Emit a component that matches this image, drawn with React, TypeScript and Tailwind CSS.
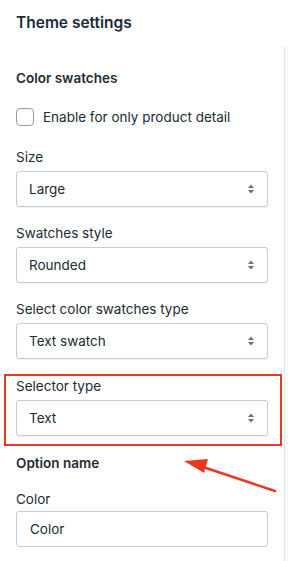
import React from "react";

const font = { fontFamily: "Inter, 'Noto Sans', sans-serif" };

const Chevrons = () => (
  <svg width="8" height="12" viewBox="0 0 8 12" className="text-[#637381]">
    <path d="M4 1.5 L7 5 H1 Z" fill="currentColor" />
    <path d="M4 10.5 L7 7 H1 Z" fill="currentColor" />
  </svg>
);

const Select = ({ label, value }: { label: string; value: string }) => (
  <div className="flex flex-col">
    <span className="mb-[4px] text-[13.5px] leading-[20px] text-[#212b36]">{label}</span>
    <div className="flex h-[36px] w-[252px] items-center justify-between rounded-[3px] border border-[#c4cdd5] bg-white pl-[12px] pr-[12px] shadow-[0_1px_0_rgba(22,29,37,0.05)]">
      <span className="text-[13.5px] text-[#212b36]">{value}</span>
      <Chevrons />
    </div>
  </div>
);

export default function App() {
  return (
    <div className="relative h-[561px] w-[288px] overflow-hidden bg-white text-[#212b36]" style={font}>
      {/* scroll track on the right */}
      <div className="absolute right-0 top-[46px] bottom-0 w-[4px] border-l border-[#e4e5e7] bg-[#f9fafb]" />

      <div className="px-[16px] pt-[12px]">
        <h1 className="text-[15.5px] font-semibold leading-[22px]">Theme settings</h1>

        <h2 className="mt-[34px] text-[13.5px] font-semibold leading-[20px]">Color swatches</h2>

        <label className="mt-[19px] flex items-center gap-[9px]">
          <span className="h-[18px] w-[18px] rounded-[4px] border border-[#919eab] bg-white shadow-[inset_0_1px_1px_rgba(0,0,0,0.06)]" />
          <span className="text-[13.5px] leading-[20px]">Enable for only product detail</span>
        </label>

        <div className="mt-[20px] flex flex-col gap-[16px]">
          <Select label="Size" value="Large" />
          <Select label="Swatches style" value="Rounded" />
          <Select label="Select color swatches type" value="Text swatch" />
        </div>
      </div>

      <div className="mx-[4px] mt-[15px] w-[278px] border-2 border-[#e8391f] pl-[10px] pt-0 pb-[8px]">
        <Select label="Selector type" value="Text" />
      </div>

      <div className="px-[16px]">
        <h3 className="mt-[7px] text-[13.5px] font-semibold leading-[20px]">Option name</h3>
        <div className="mt-[16px] flex flex-col">
          <span className="mb-[2px] text-[13.5px] leading-[20px]">Color</span>
          <div className="flex h-[36px] w-[252px] items-center rounded-[3px] border border-[#c4cdd5] bg-white px-[13px] text-[13.5px]">
            Color
          </div>
        </div>
      </div>

      {/* annotation arrow */}
      <svg className="absolute left-0 top-0" width="288" height="561" viewBox="0 0 288 561">
        <line x1="275" y1="491" x2="200" y2="466" stroke="#e8391f" strokeWidth="2.5" strokeLinecap="round" />
        <polygon points="184,461 208,459 204,473" fill="#e8391f" />
      </svg>
    </div>
  );
}
